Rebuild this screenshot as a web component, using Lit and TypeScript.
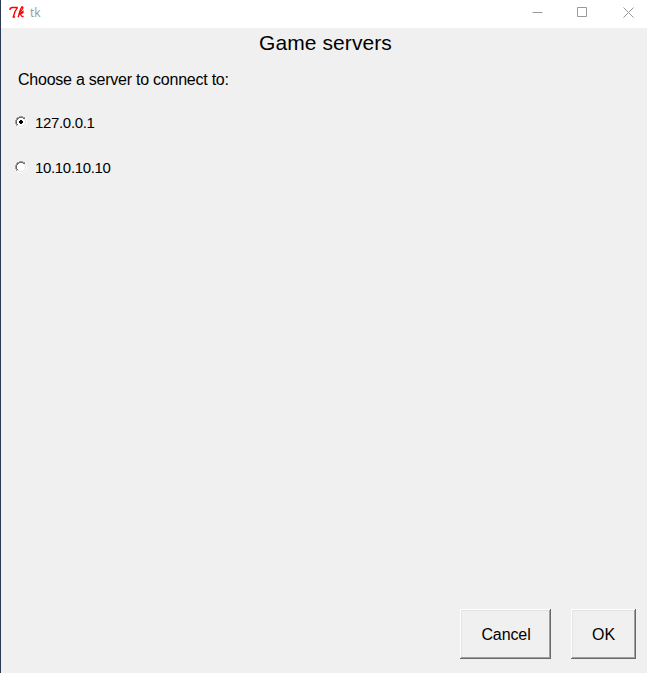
import { LitElement, html, css, svg } from "lit";
import { customElement, property } from "lit/decorators.js";

@customElement("tk-radio")
class TkRadio extends LitElement {
  @property({ type: Boolean }) checked = false;
  @property() label = "";
  static styles = css`
    :host { display: flex; align-items: center; height: 45px; font-size: 15px; line-height: 20px; }
    svg { width: 12px; height: 12px; margin-right: 8px; flex: none; shape-rendering: crispEdges; }
    .label { padding-top: 2px; letter-spacing: -0.33px; }
  `;
  render() {
    return html`<svg viewBox="0 0 12 12">
        <path d="M4 2h4v1h1v1h1v4h-1v1h-1v1H4V9H3V8H2V4h1V3h1z" fill="#fff" />
        <path d="M4 0h4v1H4zM2 1h2v1H2zM8 1h2v1H8zM1 2h1v2H1zM0 4h1v4H0zM1 8h1v2H1z" fill="#a0a0a0" />
        <path d="M4 1h4v1H4zM2 2h2v1H2zM8 2h2v1H8zM2 3h1v1H2zM1 4h1v4H1zM2 8h1v1H2z" fill="#696969" />
        <path d="M10 2h1v2h-1zM11 4h1v4h-1zM10 8h1v2h-1zM8 10h2v1H8zM2 10h2v1H2zM4 11h4v1H4z" fill="#fff" />
        <path d="M9 3h1v1H9zM10 4h1v4h-1zM9 8h1v1H9zM8 9h2v1H8zM2 9h2v1H2zM4 10h4v1H4z" fill="#e3e3e3" />
        ${this.checked ? svg`<path d="M5 4h2v1h1v2H7v1H5V7H4V5h1z" fill="#000" />` : ""}
      </svg><span class="label">${this.label}</span>`;
  }
}

@customElement("app-root")
class AppRoot extends LitElement {
  static styles = css`
    :host { display: block; width: 650px; height: 679px; background: #fff; font-family: "Liberation Sans", Arial, sans-serif; color: #000; overflow: hidden; }
    .window { box-sizing: border-box; width: 647px; height: 673px; border-left: 1px solid #2b3a55; display: flex; flex-direction: column; background: #f0f0f0; }
    .titlebar { height: 28px; flex: none; background: #fff; display: flex; align-items: center; box-sizing: border-box; padding: 0 13px 3px 8px; }
    .logo { width: 16px; height: 16px; margin: -1px 5px 0 0; }
    .name { font: 12px/16px "Open Sans", sans-serif; color: #999; flex: 1; padding-top: 1px; }
    .controls { display: flex; gap: 34px; }
    .controls svg { width: 11px; height: 11px; fill: none; stroke: #999; }
    .controls .close { margin-left: 1px; }
    h1 { margin: 3px 0 0 3px; font-size: 21px; line-height: 24px; font-weight: 400; text-align: center; letter-spacing: .08px; }
    .prompt { margin: 15px 0 0 17px; font-size: 16px; line-height: 20px; letter-spacing: -0.24px; }
    .options { margin: 9px 0 0 14px; flex: 1; }
    .buttons { display: flex; justify-content: flex-end; gap: 20px; padding: 0 11px 14px 0; }
    button { appearance: none; box-sizing: border-box; width: 65px; height: 50px; margin: 0; padding: 2px 0 0; font: 16px/20px "Liberation Sans", Arial, sans-serif; color: #000; background: #f0f0f0; border: 0; box-shadow: inset -1px -1px #696969, inset 1px 1px #fff, inset -2px -2px #a0a0a0, inset 2px 2px #e3e3e3; }
    .cancel { width: 91px; padding-left: 1px; letter-spacing: -0.1px; }
  `;
  render() {
    return html`<div class="window">
      <header class="titlebar">
        <svg class="logo" viewBox="0 0 16 16" fill="none" stroke="#f00">
          <path d="M.8 6L1.4 4.2L3 3.5H8.6" stroke-width="1.5" />
          <path d="M8.5 3.5L6 7.5L4.4 12.8M3.6 13H6" stroke-width="1.4" />
          <path d="M14 3H12.8L11.3 6L9.2 13.2" stroke-width="1.4" />
          <path d="M14 3L13.7 4.8L11.2 8M10 10L14 7.4V8.7L11.3 10.1L13.2 12.8L14.6 11.9" stroke-width="1.2" />
        </svg>
        <span class="name">tk</span>
        <div class="controls">
          <svg viewBox="0 0 11 11"><path d="M.5 5.5h10" /></svg>
          <svg viewBox="0 0 11 11"><path d="M.5.5h9v9h-9z" /></svg>
          <svg class="close" viewBox="0 0 11 11"><path d="M.5.5l10 10M10.5.5l-10 10" /></svg>
        </div>
      </header>
      <h1>Game servers</h1>
      <p class="prompt">Choose a server to connect to:</p>
      <div class="options">
        <tk-radio label="127.0.0.1" checked></tk-radio>
        <tk-radio label="10.10.10.10"></tk-radio>
      </div>
      <div class="buttons"><button class="cancel">Cancel</button><button>OK</button></div>
    </div>`;
  }
}
